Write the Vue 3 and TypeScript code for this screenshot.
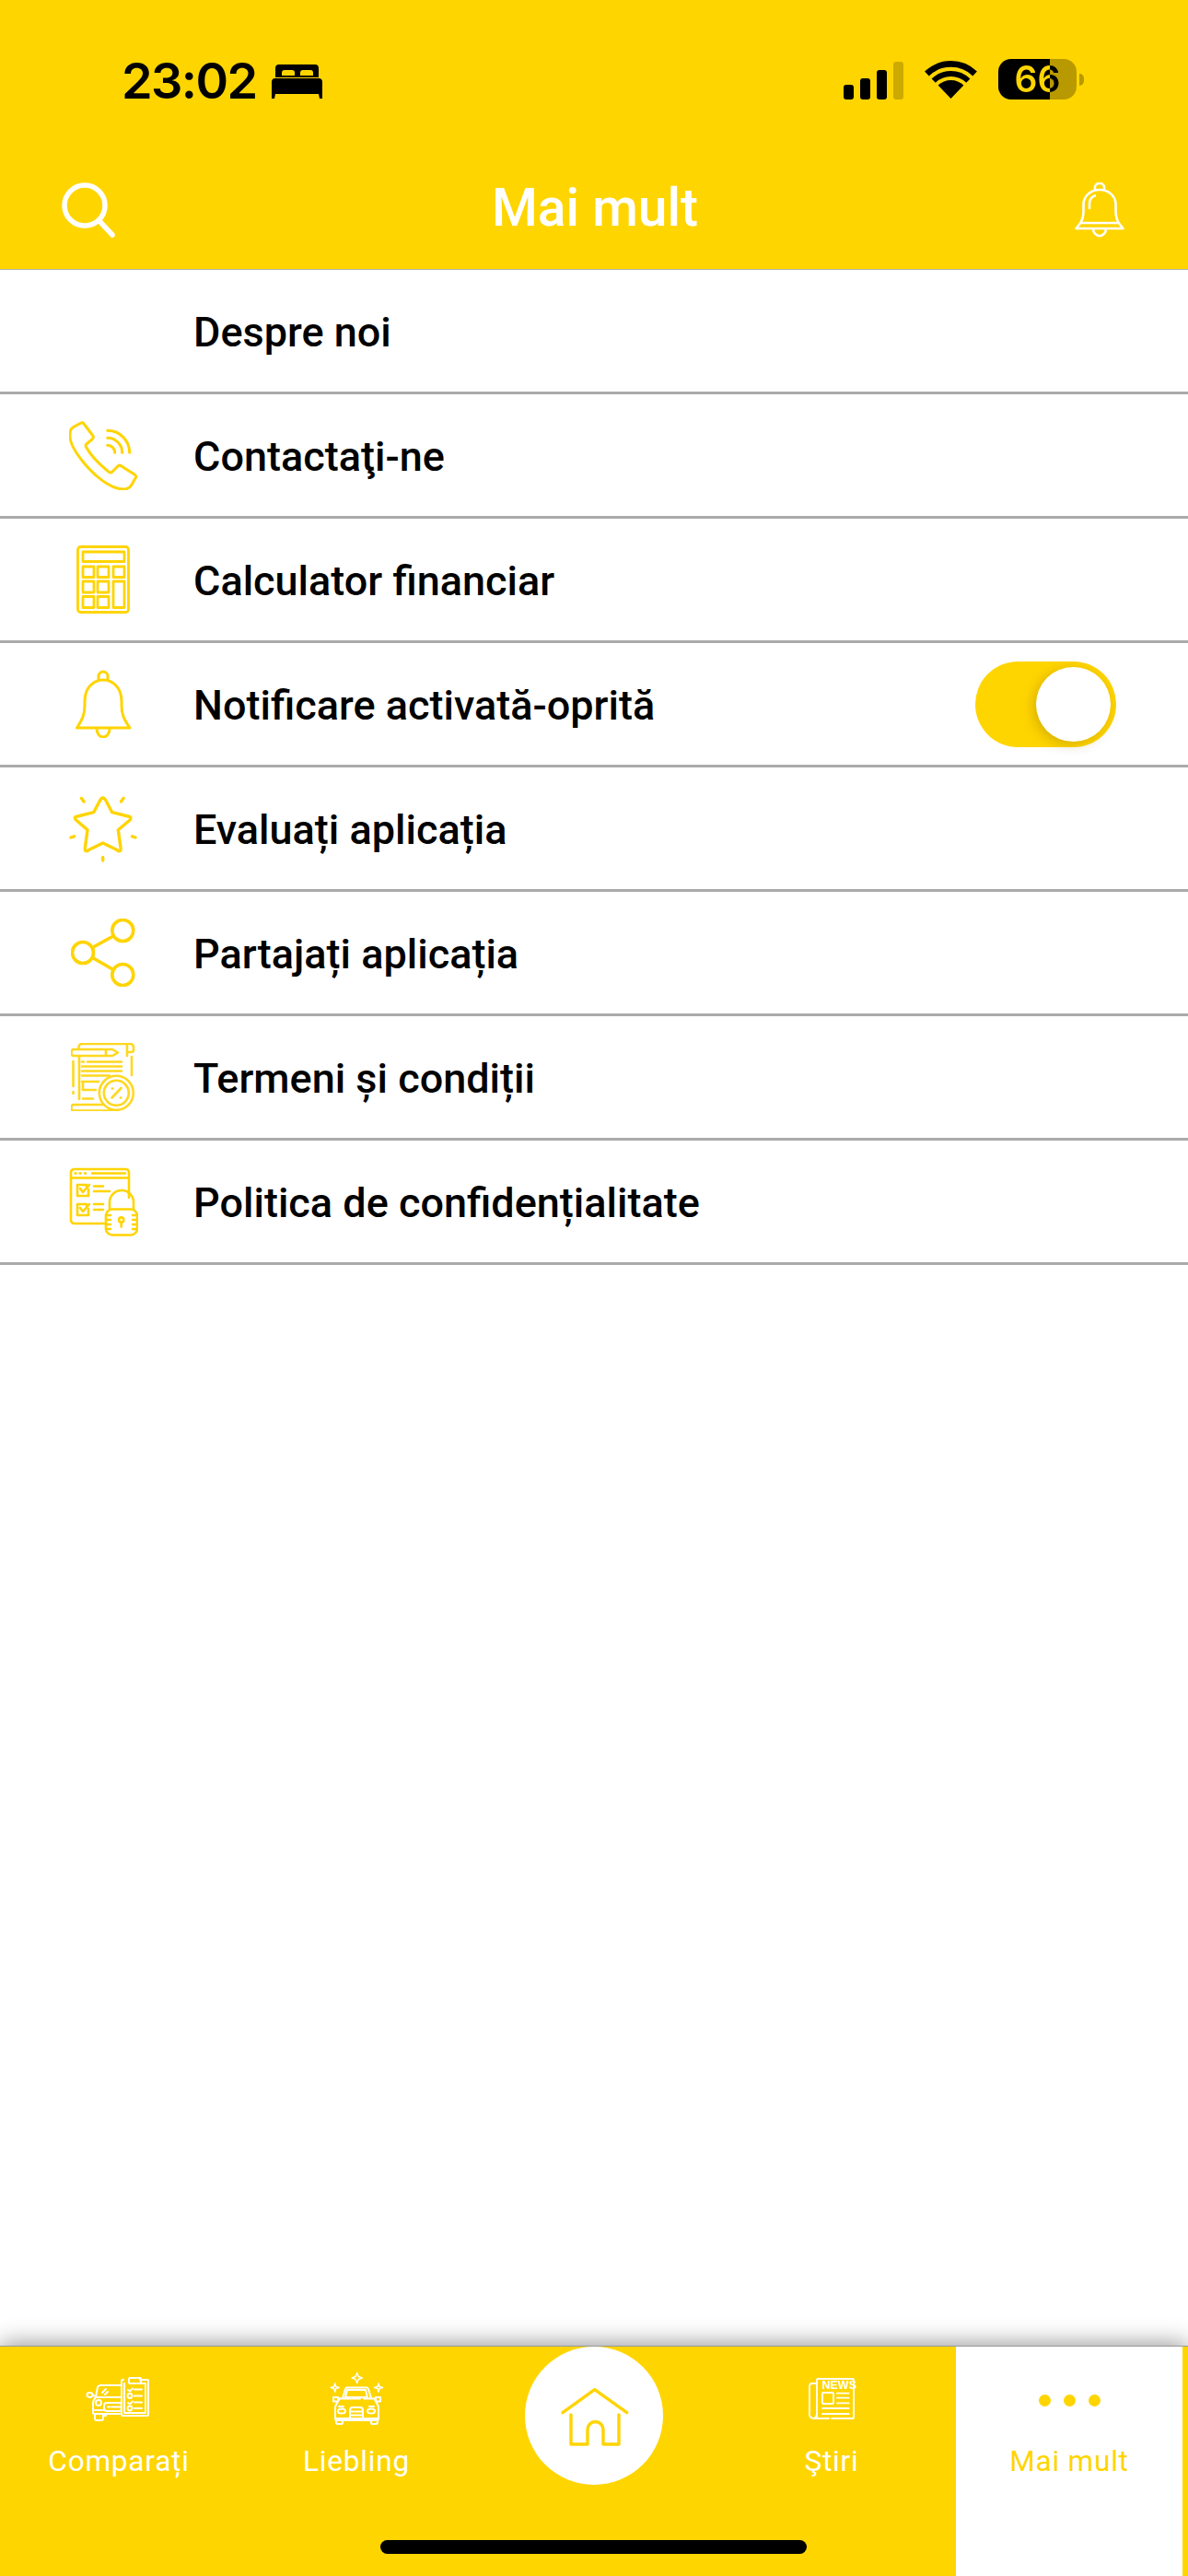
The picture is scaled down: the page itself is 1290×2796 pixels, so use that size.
<template>
  <div class="screen">
    <header class="top">
      <div class="status">
        <div class="status__left">
          <span class="status__time">23:02</span>
          <svg class="status__bed" viewBox="0 0 55 37">
            <path fill-rule="evenodd" d="M8 0h39a4 4 0 0 1 4 4v10H4V4a4 4 0 0 1 4-4zM11 12v-3q0-3 3-3h8q3 0 3 3v3zM31 12v-3q0-3 3-3h8q3 0 3 3v3z" />
            <path d="M4 15h47q4 0 4 4v18h-3l-1-5H4l-1 5H0V19q0-4 4-4z" />
          </svg>
        </div>
        <div class="status__right">
          <div class="signal">
            <i class="signal__bar signal__bar--1"></i>
            <i class="signal__bar signal__bar--2"></i>
            <i class="signal__bar signal__bar--3"></i>
            <i class="signal__bar signal__bar--4"></i>
          </div>
          <svg class="wifi" viewBox="0 0 57 42">
            <path d="M2.4 14a37.6 37.6 0 0 1 52.2 0" fill="none" stroke="#000" stroke-width="6.7" />
            <path d="M9.7 21.6a27 27 0 0 1 37.6 0" fill="none" stroke="#000" stroke-width="6" />
            <path d="M14.6 26.6a20 20 0 0 1 27.8 0L28.5 41z" />
          </svg>
          <div class="battery">
            <div class="battery__body">
              <span class="battery__num">66</span>
            </div>
            <i class="battery__cap"></i>
          </div>
        </div>
      </div>
      <div class="nav">
        <svg class="nav__icon nav__icon--search" viewBox="0 0 58 60" fill="none" stroke="#fff" stroke-width="5.5" stroke-linecap="round">
          <circle cx="25" cy="25" r="22" />
          <path d="M41 42l14 15" />
        </svg>
        <h1 class="nav__title">Mai mult</h1>
        <svg class="nav__icon nav__icon--bell" viewBox="0 0 54 60" fill="none" stroke="#fff" stroke-width="2.6" stroke-linejoin="round">
          <path d="M1.5 50l4-5c3-4 4-8 4-14v-7C9.500 15 17 8 27 8s17.500 7 17.500 16v7c0 6 1 10 4 14l4 5z" />
          <path d="M7 44h40M22 8V5a5 4 0 0 1 10 0v3M20 50a7 8 0 0 0 14 0M16 29v-6c0-5 3-8 7-9" />
        </svg>
      </div>
    </header>

    <ul class="menu">
      <li class="menu__row">
        <span class="menu__icon"></span>
        <span class="menu__label">Despre noi</span>
      </li>
      <li class="menu__row">
        <span class="menu__icon">
          <svg width="75" height="75" viewBox="0 0 75 75" fill="none" stroke="#ffd400" stroke-width="3" stroke-linecap="round" stroke-linejoin="round">
            <path d="M13 2q2-1 3 1l10 13q1 2-1 4l-5 4q-3 2-1 5c6 11 14 18 24 26q2 2 4 0l5-5q2-3 5-1l14 9q3 2 1 4l-4 7q-2 4-7 5c-16 1-35-16-46-30C6 33 0 22 1 14q0-5 3-7z" />
            <path d="M41.700 10.300a24 24 0 0 1 24 24M41.700 18.300a16 16 0 0 1 16 16M41.700 26.300a8 8 0 0 1 8 8" />
          </svg>
        </span>
        <span class="menu__label">Contactaţi-ne</span>
      </li>
      <li class="menu__row">
        <span class="menu__icon">
          <svg width="58" height="74" viewBox="0 0 58 74" fill="none" stroke="#ffd400" stroke-width="2.800" stroke-linejoin="round">
            <rect x="1.500" y="1.500" width="55" height="71" rx="3" />
            <rect x="7" y="7" width="45" height="10.500" />
            <rect v-for="cell in calcCells" :key="cell.x + '-' + cell.y" :x="cell.x" :y="cell.y" :width="12" :height="cell.h" />
          </svg>
        </span>
        <span class="menu__label">Calculator financiar</span>
      </li>
      <li class="menu__row">
        <span class="menu__icon">
          <svg width="62" height="74" viewBox="0 0 62 74" fill="none" stroke="#ffd400" stroke-width="3" stroke-linejoin="round">
            <path d="M2.500 63C9 53 11 48 11 38v-4c0-14 9-23 20-23s20 9 20 23v4c0 10 2 15 9 25z" />
            <path d="M26 11V7a5 5 0 0 1 10 0v4M24 64A7 9 0 0 0 38 64" />
          </svg>
        </span>
        <span class="menu__label">Notificare activată-oprită</span>
        <div class="toggle">
          <span class="toggle__knob"></span>
        </div>
      </li>
      <li class="menu__row">
        <span class="menu__icon">
          <svg width="75" height="75" viewBox="0 0 75 75" fill="none" stroke="#ffd400" stroke-width="3.400" stroke-linecap="round" stroke-linejoin="round">
            <path d="M33.500 7Q36.700 1 40 7L46.700 19.700 64 24Q69.500 25.300 65 29L53.300 38.700 56 58Q56.700 64 52 60.600L36.700 53 21.400 60.600Q16.700 64 17.400 58L20 38.700 8.700 29Q3.500 24.800 9.500 24L26.700 19.700z" />
            <path d="M13.500 4.500l2.500 3.500M59 4.500L56.500 8M2 47l3.500-1.200M72 47l-3.500-1.200M36.700 68.500v3.500" />
          </svg>
        </span>
        <span class="menu__label">Evaluați aplicația</span>
      </li>
      <li class="menu__row">
        <span class="menu__icon">
          <svg width="70" height="74" viewBox="0 0 70 74" fill="none" stroke="#ffd400" stroke-width="3.600">
            <circle cx="56.300" cy="13" r="11.500" />
            <circle cx="13" cy="37" r="11.500" />
            <circle cx="56.300" cy="61" r="11.500" />
            <path d="M23.500 31.500l22.500-12.500M23.500 42.500l22.500 13" />
          </svg>
        </span>
        <span class="menu__label">Partajați aplicația</span>
      </li>
      <li class="menu__row">
        <span class="menu__icon">
          <svg width="70" height="74" viewBox="0 0 70 74" fill="none" stroke="#ffd81f" stroke-width="2.600" stroke-linecap="round" stroke-linejoin="round">
            <path d="M8.500 7V5q0-4 4-4H64q4 0 4 4v3q0 2-3 2h-4M9 15v46M61 3v11" />
            <path d="M3 7h42l6 3.500-6 3.500H3q-2.500 0-2.500-3.500T3 7zM38 7v7" />
            <path d="M66 15v20M2.500 20v27M2.500 53v2M12 20.500h2M18 20.500h37M12 25.500h43M12 30.500h43M12 35.500h30M12 42h18M13 42v9h14M13 60.500h11" />
            <path d="M3 67h36M3 67q-2.500 0-2.500 3.500T3 73.500h46" />
            <circle cx="49.300" cy="54.300" r="18.500" fill="#fff" />
            <circle cx="49.300" cy="54.300" r="13.500" />
            <path d="M44.500 59.500l10-10.500M44.800 49.500h.6M53.800 59.500h.6" />
          </svg>
        </span>
        <span class="menu__label">Termeni și condiții</span>
      </li>
      <li class="menu__row">
        <span class="menu__icon">
          <svg width="75" height="75" viewBox="0 0 75 75" fill="none" stroke="#ffd400" stroke-width="2.600" stroke-linecap="round" stroke-linejoin="round">
            <path d="M39 61H6q-4 0-4-4V6q0-4 4-4h55q4 0 4 4v27M2 11.500h63M6.500 6.500h1M11.500 6.500h1M17 6.500h1M25 6.500h36" />
            <path d="M19 21v-2H9v12h12v-7M12 23l3 4 7-8M19 42v-2H9v12h12v-7M12 44l3 4 7-8" />
            <path d="M27 20.500h10M27 26h17M27 40h10M27 46h10" />
            <rect x="40" y="45.500" width="34" height="28" rx="7" />
            <path d="M44 45V38a13 13 0 0 1 26 0v7" />
            <circle cx="56.700" cy="57" r="2.600" />
            <path d="M56.700 60v4.500M40 52h5M40 57h5M40 62h5M40 67h5M69 52h5M69 57h5M69 62h5M69 67h5" />
          </svg>
        </span>
        <span class="menu__label">Politica de confidențialitate</span>
      </li>
    </ul>

    <nav class="tabs">
      <div class="tab">
        <svg class="tab__icon" width="90" height="70" viewBox="0 0 90 70" fill="none" stroke="#fff" stroke-width="2" stroke-linecap="round" stroke-linejoin="round">
          <path d="M50 13h-1q-1 0-1 1v37q0 1 1 1h27q1 0 1-1V14q0-1-1-1h-8M51 17v32h23V17h-5" />
          <rect x="56" y="11" width="13" height="6" rx="1" />
          <path d="M55 24l2 1.500 3-3M62 23.500h8M62 30.500h8M55 38l2 1.500 3-3M62 37.500h8M62 44h8" />
          <circle cx="57" cy="30.500" r="2.400" />
          <circle cx="57" cy="44" r="2.400" />
          <path d="M48 19H25q-2 0-3 2l-2 11M48 32H21M27 27l4-4M30 29l3-3M20 32q-3 3-3 7v10q0 1 2 1h27" />
          <circle cx="23" cy="38" r="3" />
          <rect x="29" y="38" width="19" height="9" rx="3" />
          <path d="M33 42.500h2M37 42.500h10M18 46h10M19 50v5q0 2 2 2h5q2 0 2-2v-5M28 52h3v-2" />
          <ellipse cx="13.500" cy="29.500" rx="3" ry="2.400" />
          <path d="M17 29.500l3 2" />
        </svg>
        <span class="tab__label">Comparați</span>
      </div>
      <div class="tab">
        <svg class="tab__icon" width="80" height="70" viewBox="0 0 80 70" fill="none" stroke="#fff" stroke-width="2" stroke-linecap="round" stroke-linejoin="round">
          <path d="M40.700 5.500l1.500 4 4 1.500-4 1.500-1.500 4-1.500-4-4-1.500 4-1.500zM16.700 17l1 3.500 3.500 1-3.500 1-1 3.500-1-3.500-3.500-1 3.500-1zM64 17l1 3.500 3.500 1-3.500 1-1 3.500-1-3.500-3.500-1 3.500-1z" stroke-width="1.500" />
          <path d="M25 33l3-10q.5-1.500 2-1.500h21q1.500 0 2 1.500l3 10M28 32h24l-2-8H30zM22 33.500h22M48 33.500h10" />
          <rect x="15" y="32" width="5" height="4.500" />
          <rect x="61" y="32" width="5" height="4.500" />
          <path d="M22 33l-4 7q-1 2-1 4v11q0 2 2 2h43q2 0 2-2V44q0-2-1-4l-4-7M18 55h45" />
          <ellipse cx="24" cy="47" rx="4" ry="2.500" />
          <ellipse cx="56" cy="47" rx="4" ry="2.500" />
          <path d="M33 55V46q0-3 3-3h8q3 0 3 3v9M33 47.500h14M33 51.500h14M21 42h5M54 42h5" />
          <path d="M18 57v2q0 2 2 2h4q1 0 1-2v-2M56 57v2q0 2 1 2h4q2 0 2-2v-2" />
        </svg>
        <span class="tab__label">Liebling</span>
      </div>
      <div class="tab tab--home">
        <div class="home">
          <svg width="90" height="80" viewBox="0 0 90 80" fill="none" stroke="#ffd400" stroke-width="3.400" stroke-linecap="round" stroke-linejoin="round">
            <path d="M11 36.700l34.700-25 35 25" />
            <path d="M20 39v32h18V55a8.500 8.500 0 0 1 17 0v16h17V39" />
          </svg>
        </div>
      </div>
      <div class="tab">
        <svg class="tab__icon" width="75" height="70" viewBox="0 0 75 70" fill="none" stroke="#fff" stroke-width="1.800" stroke-linecap="round" stroke-linejoin="round">
          <path d="M21 54V13q0-1 1-1h38q1 0 1 1v41q0 1-1 1H37M34 55H19q-6 0-6-4V20q0-3 3-3h5M21 48q0 7-4 7" />
          <text class="tab__news" x="26.500" y="23">NEWS</text>
          <rect x="27" y="27" width="12" height="12" rx="1" />
          <path d="M43 27.700h12.700M43 32.700h12.700M43 38.300h12.700M27 44h28.700M27 50h28.700" />
        </svg>
        <span class="tab__label">Ştiri</span>
      </div>
      <div class="tab tab--active">
        <div class="dots">
          <i></i>
          <i></i>
          <i></i>
        </div>
        <span class="tab__label">Mai mult</span>
      </div>
      <i class="home-bar"></i>
    </nav>
  </div>
</template>

<script setup lang="ts">
interface CalcCell {
  x: number
  y: number
  h: number
}

const calcCells: CalcCell[] = [
  { x: 7, y: 23, h: 11.5 },
  { x: 23, y: 23, h: 11.5 },
  { x: 40, y: 23, h: 11.5 },
  { x: 7, y: 39, h: 12 },
  { x: 23, y: 39, h: 12 },
  { x: 40, y: 39, h: 28.5 },
  { x: 7, y: 55.5, h: 12 },
  { x: 23, y: 55.5, h: 12 },
]
</script>

<style>
html,
body {
  margin: 0;
  background: #fff;
}
</style>

<style scoped>
.screen {
  width: 1290px;
  height: 2796px;
  display: flex;
  flex-direction: column;
  overflow: hidden;
  background: #fff;
  font-family: Roboto, "Liberation Sans", sans-serif;
}

.top {
  height: 293px;
  box-sizing: border-box;
  flex-shrink: 0;
  background: #ffd500;
  border-bottom: 1px solid #b5b5b5;
}

.status {
  height: 163px;
  box-sizing: border-box;
  padding: 63px 113px 0 132px;
  display: flex;
  justify-content: space-between;
  align-items: flex-start;
}

.status__left {
  display: flex;
  align-items: center;
  gap: 16px;
}

.status__time {
  font-family: Inter, "Liberation Sans", sans-serif;
  font-size: 54px;
  line-height: 50px;
  font-weight: 600;
  letter-spacing: -1.600px;
  color: #000;
}

.status__bed {
  width: 55px;
  height: 37px;
  margin-top: 1px;
}

.status__right {
  display: flex;
  align-items: flex-end;
  height: 44px;
  margin-top: 1px;
}

.signal {
  display: flex;
  align-items: flex-end;
  gap: 7px;
}

.signal__bar {
  display: block;
  width: 11px;
  border-radius: 3px;
  background: #000;
}

.signal__bar--1 {
  height: 16px;
}

.signal__bar--2 {
  height: 23px;
}

.signal__bar--3 {
  height: 32px;
}

.signal__bar--4 {
  height: 41px;
  background: rgba(0, 0, 0, 0.2);
}

.wifi {
  width: 57px;
  height: 42px;
  margin-left: 23px;
}

.battery {
  display: flex;
  align-items: center;
  margin-left: 23px;
  height: 44px;
}

.battery__body {
  width: 85px;
  height: 44px;
  border-radius: 14px;
  background: linear-gradient(90deg, #000 56px, #b89900 56px);
}

/* the digits flip from yellow to black where the charge ends */
.battery__num {
  display: block;
  width: 85px;
  text-align: center;
  font-family: Inter, "Liberation Sans", sans-serif;
  font-size: 39px;
  line-height: 44px;
  font-weight: 600;
  color: transparent;
  background: linear-gradient(90deg, #ffd500 56px, #000 56px);
  -webkit-background-clip: text;
  background-clip: text;
}

.battery__cap {
  display: block;
  width: 5px;
  height: 13px;
  margin-left: 3px;
  border-radius: 0 6px 6px 0;
  background: #b89900;
}

.nav {
  height: 129px;
  padding: 0 69px 0 67px;
  display: flex;
  align-items: center;
  justify-content: space-between;
}

.nav__icon--search {
  width: 58px;
  height: 60px;
}

.nav__icon--bell {
  width: 54px;
  height: 60px;
}

.nav__title {
  margin: -4px 0 0;
  font-size: 57px;
  line-height: 64px;
  font-weight: 500;
  color: #fff;
}

.menu {
  margin: 0;
  padding: 0;
  list-style: none;
  flex: 1;
}

.menu__row {
  height: 135px;
  box-sizing: border-box;
  padding: 0 78px 0 62px;
  display: flex;
  align-items: center;
  border-bottom: 3px solid #aaa;
}

.menu__icon {
  width: 100px;
  height: 75px;
  margin-right: 48px;
  display: flex;
  align-items: center;
  justify-content: center;
  flex-shrink: 0;
}

.menu__label {
  flex: 1;
  margin-top: 3px;
  font-size: 45px;
  line-height: 52px;
  font-weight: 500;
  color: #000;
}

.toggle {
  width: 153px;
  height: 93px;
  box-sizing: border-box;
  padding: 6px;
  display: flex;
  justify-content: flex-end;
  border-radius: 47px;
  background: #ffd500;
}

.toggle__knob {
  width: 81px;
  height: 81px;
  border-radius: 50%;
  background: #fff;
  box-shadow: -3px 3px 14px rgba(120, 90, 0, 0.3);
}

.tabs {
  position: relative;
  height: 249px;
  flex-shrink: 0;
  display: grid;
  grid-template-columns: repeat(5, 258px);
  background: #ffd500;
  box-shadow: 0 -1px 0 #999, 0 -3px 24px rgba(0, 0, 0, 0.42);
}

.tab {
  display: flex;
  flex-direction: column;
  align-items: center;
  padding-top: 23px;
}

.tab__icon {
  display: block;
  margin-bottom: 14px;
}

.tab__label {
  font-size: 31.500px;
  line-height: 36px;
  letter-spacing: 0.8px;
  color: #fff;
}

.tab__news {
  font-family: "Liberation Sans", sans-serif;
  font-size: 12.500px;
  font-weight: 700;
  fill: #fff;
  stroke: none;
}

.tab--home {
  padding-top: 0;
}

.home {
  width: 150px;
  height: 150px;
  display: flex;
  align-items: center;
  justify-content: center;
  border-radius: 50%;
  background: #fff;
}

.tab--active {
  margin: 0 6px;
  background: #fff;
}

.tab--active .tab__label {
  color: #ffd500;
}

.dots {
  height: 70px;
  margin-bottom: 14px;
  display: flex;
  align-items: center;
  gap: 14px;
}

.dots i {
  display: block;
  width: 13px;
  height: 13px;
  border-radius: 50%;
  background: #ffd500;
}

.home-bar {
  position: absolute;
  left: 413px;
  top: 210px;
  width: 463px;
  height: 15px;
  border-radius: 8px;
  background: #000;
}
</style>
